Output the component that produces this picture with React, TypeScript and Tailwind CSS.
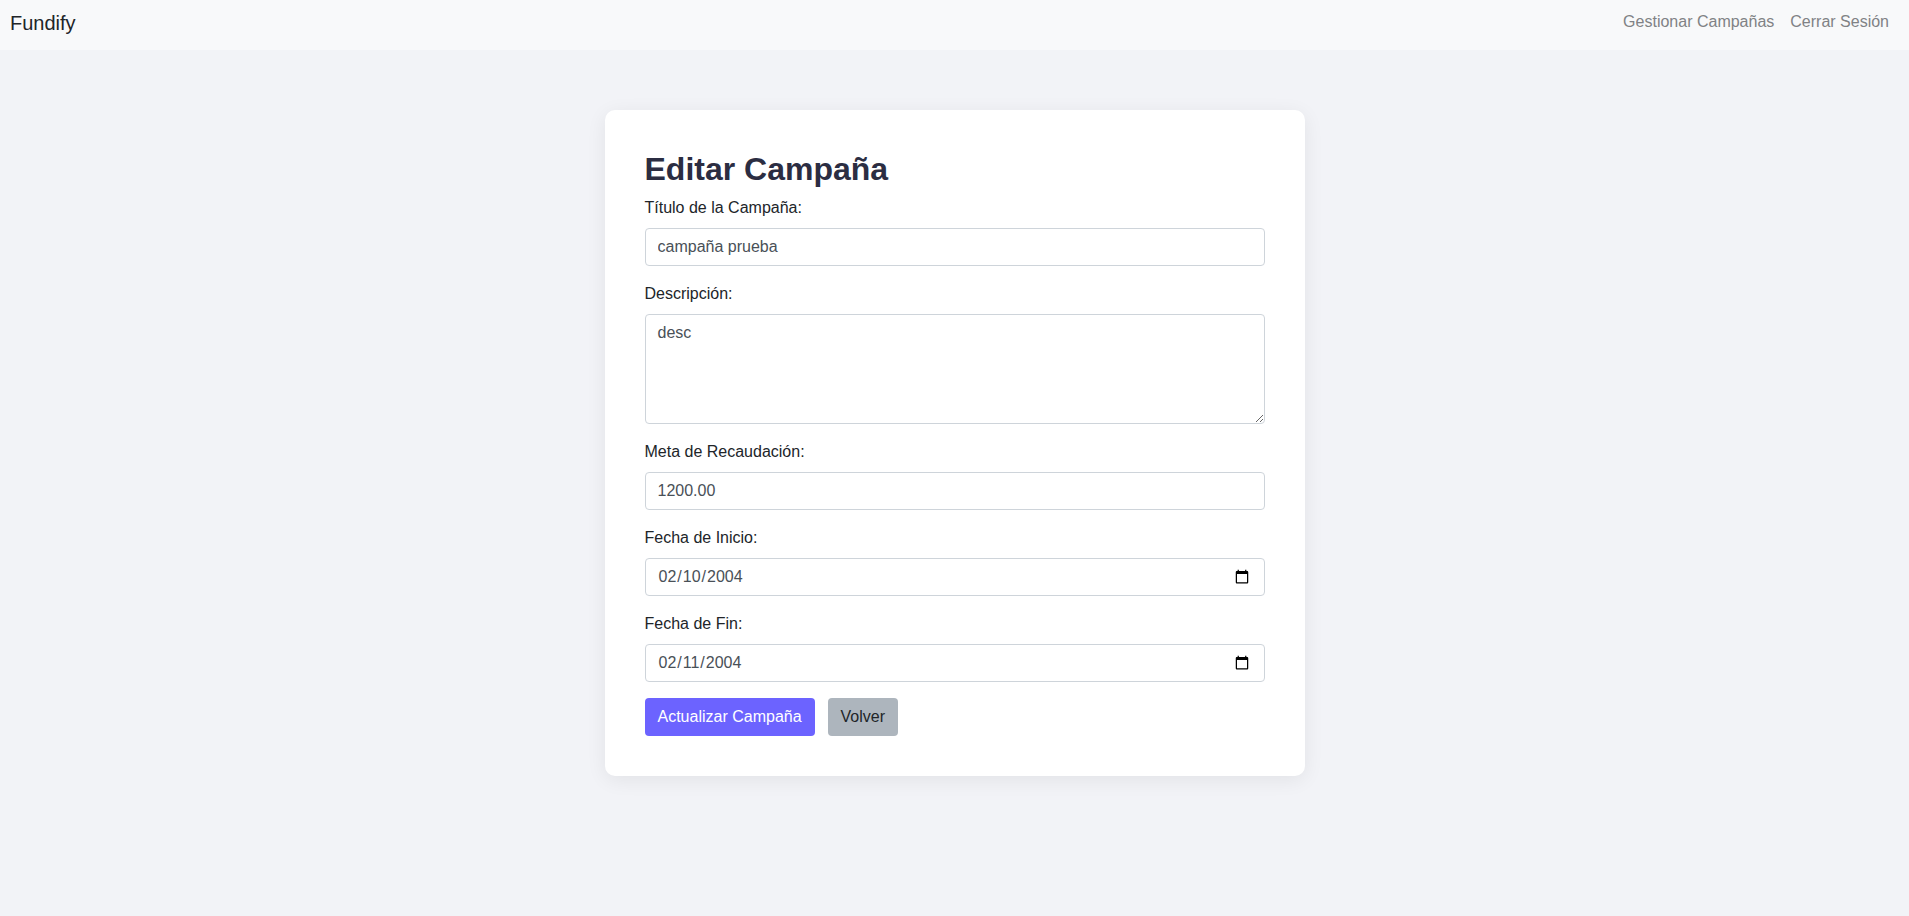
import React, { useState } from 'react';

const font = { fontFamily: '"Liberation Sans", Arial, sans-serif' };

const EditCampaign: React.FC = () => {
  const [title, setTitle] = useState('campaña prueba');
  const [description, setDescription] = useState('desc');
  const [goal, setGoal] = useState('1200.00');
  const [startDate, setStartDate] = useState('2004-02-10');
  const [endDate, setEndDate] = useState('2004-02-11');

  const inputClass =
    'block w-full h-[38px] px-[12px] py-[6px] text-[16px] leading-[24px] text-[#495057] bg-white border border-[#ced4da] rounded-[4px] outline-none';

  return (
    <div className="min-h-screen bg-[#f2f3f7] text-[#212529]" style={font}>
      {/* Navbar */}
      <nav className="h-[50px] bg-[#f8f9fa] flex items-start justify-between pl-[10px] pr-[12px] pt-[8px]">
        <a href="#" className="text-[20px] leading-[30px] text-[#212529]">
          Fundify
        </a>
        <div className="flex mt-[2px]">
          <a href="#" className="px-[8px] text-[16px] leading-[24px] text-[#808285]">
            Gestionar Campañas
          </a>
          <a href="#" className="px-[8px] text-[16px] leading-[24px] text-[#808285]">
            Cerrar Sesión
          </a>
        </div>
      </nav>

      {/* Card */}
      <div className="w-[700px] mx-auto mt-[60px] bg-white rounded-[10px] shadow-[0_4px_20px_rgba(0,0,0,0.07)] p-[40px]">
        <h2 className="text-[32px] leading-[1.2] font-bold text-[#2b2d42] mb-[8px]">
          Editar Campaña
        </h2>
        <form onSubmit={(e) => e.preventDefault()}>
          <div className="mb-[16px]">
            <label className="block mb-[8px] text-[16px] leading-[24px]">
              Título de la Campaña:
            </label>
            <input
              type="text"
              value={title}
              onChange={(e) => setTitle(e.target.value)}
              className={inputClass}
            />
          </div>
          <div className="mb-[16px]">
            <label className="block mb-[8px] text-[16px] leading-[24px]">
              Descripción:
            </label>
            <textarea
              rows={4}
              value={description}
              onChange={(e) => setDescription(e.target.value)}
              className="block w-full h-[110px] px-[12px] py-[6px] text-[16px] leading-[24px] text-[#495057] bg-white border border-[#ced4da] rounded-[4px] outline-none"
            />
          </div>
          <div className="mb-[16px]">
            <label className="block mb-[8px] text-[16px] leading-[24px]">
              Meta de Recaudación:
            </label>
            <input
              type="number"
              value={goal}
              onChange={(e) => setGoal(e.target.value)}
              className={inputClass}
            />
          </div>
          <div className="mb-[16px]">
            <label className="block mb-[8px] text-[16px] leading-[24px]">
              Fecha de Inicio:
            </label>
            <input
              type="date"
              value={startDate}
              onChange={(e) => setStartDate(e.target.value)}
              className={inputClass}
            />
          </div>
          <div className="mb-[16px]">
            <label className="block mb-[8px] text-[16px] leading-[24px]">
              Fecha de Fin:
            </label>
            <input
              type="date"
              value={endDate}
              onChange={(e) => setEndDate(e.target.value)}
              className={inputClass}
            />
          </div>
          <div className="flex gap-[13px]">
            <button
              type="submit"
              className="h-[38px] px-[12px] border border-transparent rounded-[4px] bg-[#6c63ff] text-white text-[16px] leading-[24px]"
            >
              Actualizar Campaña
            </button>
            <button
              type="button"
              className="h-[38px] px-[12px] border border-transparent rounded-[4px] bg-[#adb5bd] text-[#212529] text-[16px] leading-[24px]"
            >
              Volver
            </button>
          </div>
        </form>
      </div>
    </div>
  );
};

export default EditCampaign;
